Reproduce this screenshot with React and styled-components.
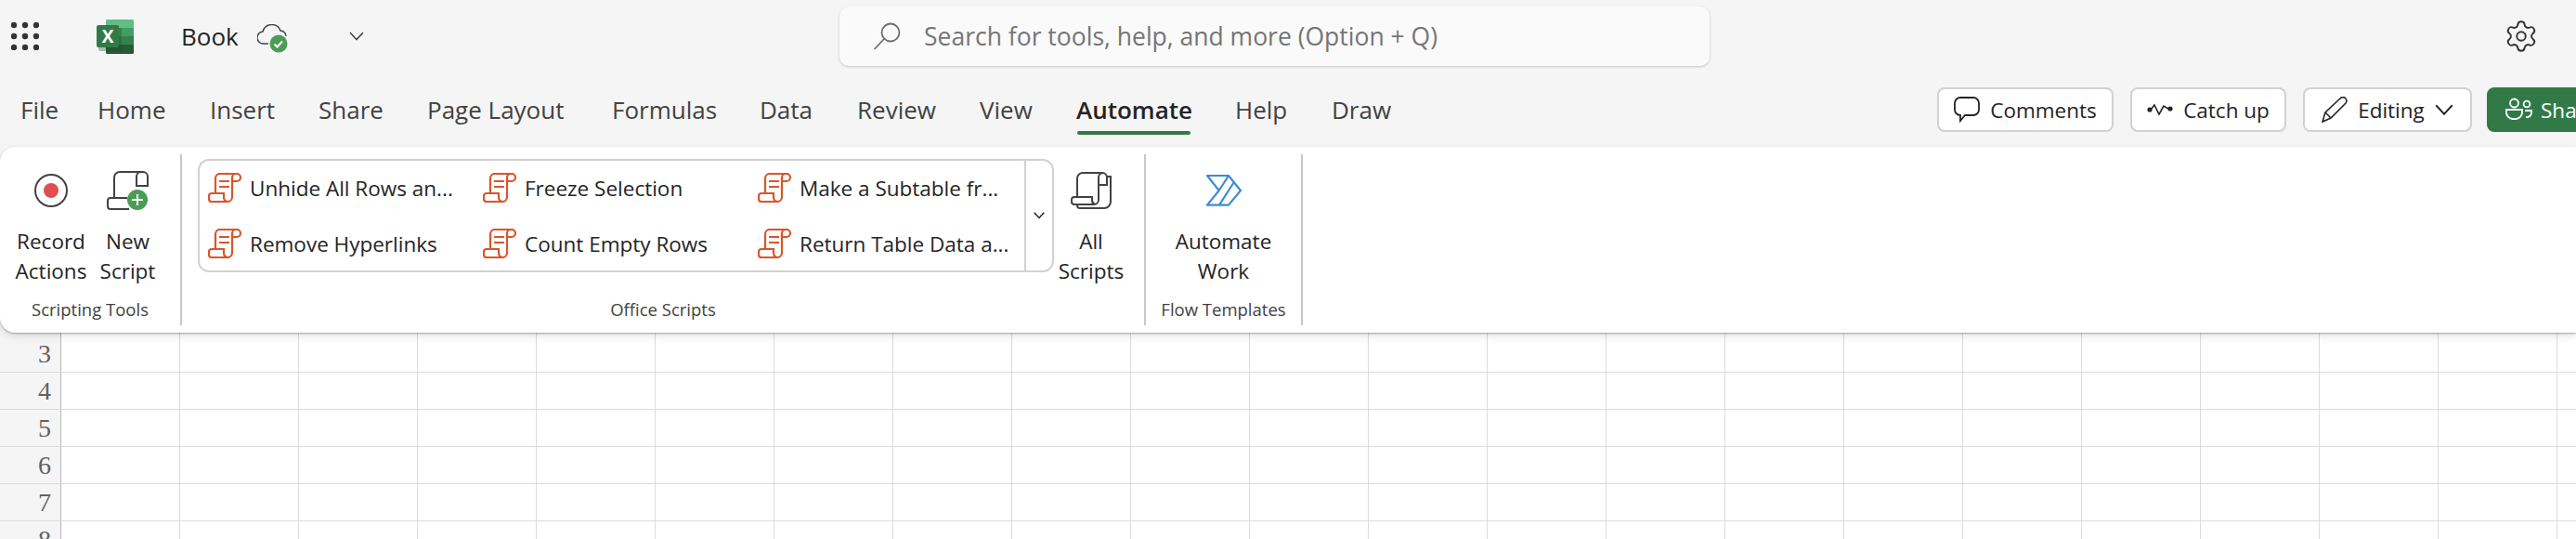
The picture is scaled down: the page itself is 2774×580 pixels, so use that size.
import styled, { createGlobalStyle } from "styled-components";
import { Settings } from "lucide-react";

const GlobalStyle = createGlobalStyle`
  html, body {
    margin: 0;
    padding: 0;
    overflow: hidden;
    background: #f5f5f5;
    font-family: "Open Sans", "Noto Sans", sans-serif;
  }
`;

const Page = styled.div`
  display: flex;
  flex-direction: column;
  width: 2774px;
  height: 580px;
  overflow: hidden;
  background: #f5f5f5;
`;

// title bar
const TitleBar = styled.header`
  display: flex;
  align-items: center;
  flex-shrink: 0;
  height: 78px;
  padding-left: 12px;
`;

const LogoSlot = styled.div`
  display: flex;
  margin-left: 62px;
`;

const BookName = styled.span`
  margin-left: 51px;
  width: 82px;
  font-size: 26px;
  color: #242424;
`;

const CloudSlot = styled.div`
  display: flex;
  width: 99px;
  padding-top: 5px;
`;

const TitleChevron = styled.div`
  display: flex;
  width: 26px;
`;

const SearchBox = styled.div`
  display: flex;
  align-items: center;
  gap: 25px;
  margin-left: 502px;
  width: 937px;
  height: 64px;
  padding-left: 36px;
  box-sizing: border-box;
  border-radius: 10px;
  background: #fafafa;
  box-shadow: 0 1px 3px rgba(0, 0, 0, 0.2);
  font-size: 26.5px;
  color: #757575;
`;

const GearSlot = styled.div`
  display: flex;
  margin-left: 855px;
  color: #333;
`;

// tabs row
const TabRow = styled.div`
  display: flex;
  align-items: center;
  flex-shrink: 0;
  height: 80px;
  padding-left: 22px;
`;

const TabList = styled.nav`
  display: flex;
  align-items: center;
  flex-shrink: 0;
  width: 2064px;
  height: 100%;
`;

const Tab = styled.div`
  position: relative;
  flex-shrink: 0;
  width: ${({ $w }) => $w}px;
  font-size: 26px;
  font-weight: ${({ $active }) => ($active ? 600 : 400)};
  color: ${({ $active }) => ($active ? "#242424" : "#424242")};
  white-space: nowrap;

  ${({ $active }) =>
    $active &&
    `&::after {
      content: "";
      position: absolute;
      left: 1px;
      top: 41px;
      width: 122px;
      height: 4px;
      border-radius: 2px;
      background: #317a47;
    }`}
`;

const Actions = styled.div`
  display: flex;
  gap: 18px;
  flex-shrink: 0;
`;

const ActionButton = styled.button`
  display: flex;
  align-items: center;
  justify-content: center;
  gap: ${({ $gap }) => $gap ?? 11}px;
  flex-shrink: 0;
  width: ${({ $w }) => $w}px;
  height: 48px;
  padding: 0;
  border: 2px solid #d1d1d1;
  border-radius: 8px;
  background: #fff;
  font-family: inherit;
  font-size: 22.5px;
  color: #242424;
`;

const ShareButton = styled(ActionButton)`
  justify-content: flex-start;
  margin-left: -2px;
  padding-left: 18px;
  border-color: #317a47;
  background: #317a47;
  color: #fff;
`;

// ribbon
const Ribbon = styled.section`
  position: relative;
  z-index: 1;
  display: flex;
  flex-shrink: 0;
  height: 200px;
  box-sizing: border-box;
  padding: 8px 0;
  border-radius: 16px 0 0 16px;
  background: #fff;
  box-shadow: 0 1px 2px rgba(0, 0, 0, 0.3), 0 4px 10px rgba(0, 0, 0, 0.1);
`;

const Group = styled.div`
  display: flex;
  flex-direction: column;
  flex-shrink: 0;
  width: ${({ $w }) => $w}px;
  height: 184px;
  box-sizing: border-box;
  border-right: 2px solid #c8c8c8;
`;

const GroupBody = styled.div`
  display: flex;
  flex: 1;
  padding-left: ${({ $pad }) => $pad}px;
`;

const GroupLabel = styled.div`
  height: 34px;
  line-height: 34px;
  text-align: center;
  font-size: 18.5px;
  color: #424242;
`;

const LargeButton = styled.div`
  display: flex;
  flex-direction: column;
  align-items: center;
  flex-shrink: 0;
  width: ${({ $w }) => $w}px;
  padding-top: 8px;
  font-size: 22.5px;
  line-height: 32px;
  color: #242424;
  text-align: center;
`;

const LargeIcon = styled.div`
  display: flex;
  align-items: center;
  justify-content: center;
  height: 62px;
  margin-bottom: 8px;
`;

const Gallery = styled.div`
  display: flex;
  flex-shrink: 0;
  width: 922px;
  height: 122px;
  margin-top: 5px;
  box-sizing: border-box;
  border: 2px solid #d1d1d1;
  border-radius: 12px;
`;

const GalleryItems = styled.div`
  display: grid;
  grid-template-columns: repeat(3, 296px);
  grid-auto-rows: 60px;
  flex-shrink: 0;
  width: 888px;
  margin-top: -1px;
`;

const GalleryItem = styled.div`
  display: flex;
  align-items: center;
  gap: 9px;
  padding-left: 9px;
  font-size: 22.5px;
  color: #242424;
  white-space: nowrap;
`;

const GalleryMore = styled.div`
  display: flex;
  align-items: center;
  justify-content: center;
  flex: 1;
  border-left: 2px solid #d1d1d1;
`;

// sheet
const Sheet = styled.main`
  display: flex;
  flex-direction: column;
  flex: 1;
  background: #fff;
`;

const SheetRow = styled.div`
  display: flex;
  flex-shrink: 0;
  height: ${({ $h }) => $h}px;
  box-sizing: border-box;
  border-bottom: 1px solid #dcdcdc;
`;

const RowHeader = styled.div`
  display: flex;
  align-items: flex-end;
  justify-content: flex-end;
  flex-shrink: 0;
  width: 66px;
  box-sizing: border-box;
  padding-right: 10px;
  padding-bottom: 3px;
  border-right: 1px solid #b8b8b8;
  background: #f5f5f5;
  font-family: "Liberation Serif", serif;
  font-size: 28px;
  line-height: 32px;
  color: #616161;
`;

const Cell = styled.div`
  flex-shrink: 0;
  width: 128px;
  box-sizing: border-box;
  border-right: 1px solid #dcdcdc;
`;

const Waffle = () => (
  <svg width="30" height="30" viewBox="0 0 30 30" fill="#333">
    {[3, 15, 27].map((y) =>
      [3, 15, 27].map((x) => <circle key={`${x}-${y}`} cx={x} cy={y} r="3.2" />)
    )}
  </svg>
);

const ExcelLogo = () => (
  <svg width="40" height="37" viewBox="0 0 40 37">
    <rect x="10" width="30" height="10" rx="1.5" fill="#62bd85" />
    <rect x="10" y="9" width="30" height="10" fill="#3f9e64" />
    <rect x="10" y="18" width="30" height="10" fill="#37804f" />
    <rect x="10" y="27" width="30" height="10" rx="1.5" fill="#275a35" />
    <rect x="2" y="9" width="25" height="25" rx="2" fill="#1d4d2b" opacity="0.35" />
    <rect y="6" width="24" height="24" rx="2" fill="#317a47" />
    <text x="12" y="25" textAnchor="middle" fontFamily="Open Sans" fontWeight="700" fontSize="19" fill="#fff">
      X
    </text>
  </svg>
);

const CloudCheck = () => (
  <svg width="34" height="32" viewBox="0 0 34 32" fill="none">
    <path
      d="M12 21H7a6.5 6.5 0 0 1-1-13a10 10 0 0 1 19-1a6 6 0 0 1 6 6"
      stroke="#424242"
      strokeWidth="1.5"
    />
    <circle cx="23" cy="21" r="9.5" fill="#4b9c55" />
    <path d="M18.5 21.5l3 3 5.5-6" stroke="#fff" strokeWidth="2" />
  </svg>
);

const Chevron = ({ size = 16, color = "#424242", width = 1.5 }) => (
  <svg width={size} height={size * 0.6} viewBox="0 0 16 9.6" fill="none">
    <path d="M1 1l7 7.6L15 1" stroke={color} strokeWidth={width} />
  </svg>
);

const SearchIcon = () => (
  <svg width="30" height="30" viewBox="0 0 30 30" fill="none" stroke="#6e6e6e" strokeWidth="1.8">
    <circle cx="19" cy="11" r="9.5" />
    <path d="M12 18L1.5 29" />
  </svg>
);

const CommentIcon = () => (
  <svg width="28" height="28" viewBox="0 0 28 28" fill="none" stroke="#242424" strokeWidth="1.8">
    <path d="M7 1H21a6 6 0 0 1 6 6v7a6 6 0 0 1-6 6H12L7 26V20a6 6 0 0 1-6-6V7a6 6 0 0 1 6-6z" />
  </svg>
);

const CatchUpIcon = () => (
  <svg width="28" height="14" viewBox="0 0 28 14" fill="none">
    <path d="M4 7L8 2L13 12L18 3L23 6" stroke="#242424" strokeWidth="1.6" />
    <circle cx="3" cy="7" r="2.6" fill="#242424" />
    <circle cx="25" cy="6" r="2.6" fill="#242424" />
  </svg>
);

const PencilIcon = () => (
  <svg width="28" height="28" viewBox="0 0 28 28" fill="none" stroke="#242424" strokeWidth="1.6">
    <path d="M1 27L4 17L20 2a3.6 3.6 0 0 1 6 5L10 23Z" />
    <path d="M4 17L10 23" />
  </svg>
);

const PeopleIcon = () => (
  <svg width="29" height="26" viewBox="0 0 29 26" fill="none" stroke="#fff" strokeWidth="1.8">
    <circle cx="9.5" cy="6" r="4.5" />
    <path d="M1 13H18V16a7 7 0 0 1-7 7H8a7 7 0 0 1-7-7Z" />
    <circle cx="23" cy="7" r="3.4" />
    <path d="M21 14H28V16a5 5 0 0 1-6 5" />
  </svg>
);

const RecordIcon = () => (
  <svg width="38" height="38" viewBox="0 0 38 38" fill="none">
    <circle cx="19" cy="19" r="17" stroke="#424242" strokeWidth="2" />
    <circle cx="19" cy="19" r="8" fill="#e04f4f" />
  </svg>
);

const NewScriptIcon = () => (
  <svg width="45" height="42" viewBox="0 0 45 42" fill="none">
    <g stroke="#424242" strokeWidth="2">
      <path d="M8 29V7a6 6 0 0 1 6-6H39a5 5 0 0 1 5 5V16H32V6a5 5 0 0 1 5-5" />
      <path d="M22 29H4a3 3 0 0 0-3 3v6a3 3 0 0 0 3 3H24" />
    </g>
    <circle cx="33" cy="31" r="11" fill="#4b9c55" />
    <path d="M33 25V37M27 31H39" stroke="#fff" strokeWidth="2" />
  </svg>
);

const ScriptIcon = () => (
  <svg width="36" height="32" viewBox="0 0 36 32" fill="none" stroke="#d9562b" strokeWidth="2.2">
    <path d="M8 22V6a5 5 0 0 1 5-5H31a4 4 0 0 1 4 4 4 4 0 0 1-4 4H26V5a4 4 0 0 1 4-4" />
    <path d="M26 5V26a5 5 0 0 1-5 5H4a3 3 0 0 1-3-3V25a3 3 0 0 1 3-3H17V26a5 5 0 0 0 4 5" />
    <path d="M12 9H23M12 15H23" />
  </svg>
);

const AllScriptsIcon = () => (
  <svg width="45" height="40" viewBox="0 0 45 40" fill="none" stroke="#424242" strokeWidth="2">
    <path d="M7 27V7a6 6 0 0 1 6-6H34a5 5 0 0 1 5 5V14H30V6a5 5 0 0 1 5-5" />
    <path d="M30 6V30a5 5 0 0 1-5 5H4a3 3 0 0 1-3-3V30a3 3 0 0 1 3-3H23V30a5 5 0 0 0 3 5" />
    <path d="M39 5H43V32a7 7 0 0 1-7 7H10a3 3 0 0 1-3-3" />
  </svg>
);

const AutomateIcon = () => (
  <svg width="38" height="34" viewBox="0 0 38 34" fill="none" stroke="#3f8bd0" strokeWidth="2.2" strokeLinejoin="round">
    <path d="M1 1H24L37 17L24 32.6H1L13.7 17Z" />
    <path d="M24 1L13.7 17M29.5 8.5L14 32.6" />
  </svg>
);

const TABS = [
  ["File", 83],
  ["Home", 121],
  ["Insert", 117],
  ["Share", 117],
  ["Page Layout", 199],
  ["Formulas", 159],
  ["Data", 105],
  ["Review", 132],
  ["View", 104],
  ["Automate", 171, true],
  ["Help", 104],
  ["Draw", 80],
];

const SCRIPTS = [
  "Unhide All Rows an...",
  "Freeze Selection",
  "Make a Subtable fr...",
  "Remove Hyperlinks",
  "Count Empty Rows",
  "Return Table Data a...",
];

const ROWS = [3, 4, 5, 6, 7, 8];
const CELLS = Array.from({ length: 22 }, (_, i) => i);

export default function App() {
  return (
    <Page>
      <GlobalStyle />
      <TitleBar>
        <Waffle />
        <LogoSlot>
          <ExcelLogo />
        </LogoSlot>
        <BookName>Book</BookName>
        <CloudSlot>
          <CloudCheck />
        </CloudSlot>
        <TitleChevron>
          <Chevron />
        </TitleChevron>
        <SearchBox>
          <SearchIcon />
          Search for tools, help, and more (Option + Q)
        </SearchBox>
        <GearSlot>
          <Settings size={38} strokeWidth={1.2} />
        </GearSlot>
      </TitleBar>

      <TabRow>
        <TabList>
          {TABS.map(([name, w, active]) => (
            <Tab key={name} $w={w} $active={active}>
              {name}
            </Tab>
          ))}
        </TabList>
        <Actions>
          <ActionButton $w={190}>
            <CommentIcon />
            Comments
          </ActionButton>
          <ActionButton $w={168}>
            <CatchUpIcon />
            Catch up
          </ActionButton>
          <ActionButton $w={182}>
            <PencilIcon />
            Editing
            <Chevron size={20} color="#242424" />
          </ActionButton>
          <ShareButton $w={180} $gap={9}>
            <PeopleIcon />
            Share
          </ShareButton>
        </Actions>
      </TabRow>

      <Ribbon>
        <Group $w={196}>
          <GroupBody $pad={14}>
            <LargeButton $w={82}>
              <LargeIcon>
                <RecordIcon />
              </LargeIcon>
              Record
              <br />
              Actions
            </LargeButton>
            <LargeButton $w={83}>
              <LargeIcon>
                <NewScriptIcon />
              </LargeIcon>
              New
              <br />
              Script
            </LargeButton>
          </GroupBody>
          <GroupLabel>Scripting Tools</GroupLabel>
        </Group>

        <Group $w={1038}>
          <GroupBody $pad={17}>
            <Gallery>
              <GalleryItems>
                {SCRIPTS.map((name) => (
                  <GalleryItem key={name}>
                    <ScriptIcon />
                    {name}
                  </GalleryItem>
                ))}
              </GalleryItems>
              <GalleryMore>
                <Chevron size={12} color="#242424" width={2} />
              </GalleryMore>
            </Gallery>
            <LargeButton $w={80}>
              <LargeIcon>
                <AllScriptsIcon />
              </LargeIcon>
              All
              <br />
              Scripts
            </LargeButton>
          </GroupBody>
          <GroupLabel>Office Scripts</GroupLabel>
        </Group>

        <Group $w={169}>
          <GroupBody>
            <LargeButton $w={167}>
              <LargeIcon>
                <AutomateIcon />
              </LargeIcon>
              Automate
              <br />
              Work
            </LargeButton>
          </GroupBody>
          <GroupLabel>Flow Templates</GroupLabel>
        </Group>
      </Ribbon>

      <Sheet>
        {ROWS.map((row) => (
          <SheetRow key={row} $h={row === 3 ? 43 : 40}>
            <RowHeader>{row}</RowHeader>
            {CELLS.map((c) => (
              <Cell key={c} />
            ))}
          </SheetRow>
        ))}
      </Sheet>
    </Page>
  );
}
